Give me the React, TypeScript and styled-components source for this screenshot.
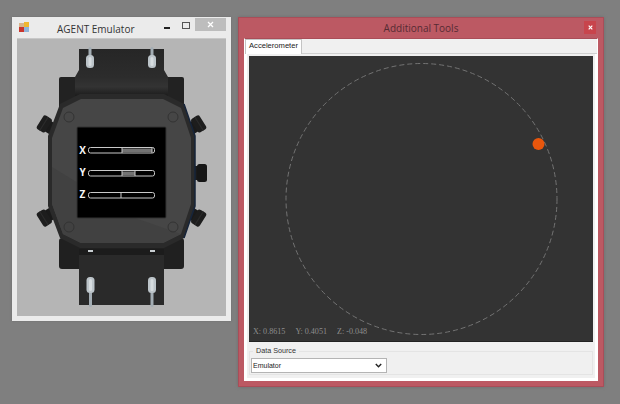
import React from "react";
import styled, { createGlobalStyle } from "styled-components";

const Global = createGlobalStyle`
  html, body { margin: 0; padding: 0; background: #7f7f7f; }
  #root { width: 620px; height: 404px; overflow: hidden; }
`;

const Desktop = styled.div`
  position: relative;
  width: 620px;
  height: 404px;
  background: #7f7f7f;
  font-family: "Liberation Sans", Arial, sans-serif;
`;

const EmulatorWindow = styled.section`
  position: absolute;
  left: 12px;
  top: 17px;
  width: 219px;
  height: 304px;
  box-sizing: border-box;
  background: #ebebeb;
  padding: 0 5px 5px;
  display: flex;
  flex-direction: column;
  box-shadow: 0 0 2px #6c6c6c;
`;

const EmulatorTitleBar = styled.header`
  height: 21px;
  flex: none;
  display: flex;
  align-items: flex-start;
`;

const AppIcon = styled.svg`
  width: 11px;
  height: 11px;
  margin: 5px 0 0 2px;
  flex: none;
`;

const EmulatorTitle = styled.h1`
  margin: 4px 0 0 27px;
  width: 90px;
  font: 400 10px/16px "Open Sans", "Noto Sans", sans-serif;
  color: #333;
  white-space: nowrap;
`;

const Caption = styled.div`
  margin-left: auto;
  display: flex;
  align-items: flex-start;
`;

const CaptionButton = styled.div<{ $w: number; $close?: boolean; $drop?: number }>`
  width: ${(p) => p.$w}px;
  height: 13px;
  margin-top: 1px;
  padding-top: ${(p) => p.$drop ?? 0}px;
  box-sizing: border-box;
  display: flex;
  align-items: center;
  justify-content: center;
  background: ${(p) => (p.$close ? "#bdbdbd" : "transparent")};
`;

const WatchStage = styled.div`
  flex: 1;
  background: #b5b5b5;
  border-top: 1px solid #c8c8c8;
  min-height: 0;
  svg { display: block; }
`;

const ToolsWindow = styled.section`
  position: absolute;
  left: 238px;
  top: 17px;
  width: 366px;
  height: 370px;
  box-sizing: border-box;
  background: #bc5963;
  border: 1px solid #a94d58;
  padding: 0 5px 5px;
  display: flex;
  flex-direction: column;
  box-shadow: 0 0 3px #6e6e6e;
`;

const ToolsTitleBar = styled.header`
  height: 20px;
  flex: none;
  display: flex;
  align-items: center;
  justify-content: center;
  position: relative;
`;

const ToolsTitle = styled.h2`
  margin: 0;
  font: 400 10px/16px "Open Sans", "Noto Sans", sans-serif;
  color: #562b33;
`;

const ToolsClose = styled.div`
  position: absolute;
  right: 2px;
  top: 3px;
  width: 12px;
  height: 13px;
  background: #c8444c;
  display: flex;
  align-items: center;
  justify-content: center;
`;

const Client = styled.div`
  flex: 1;
  background: #f0f0f0;
  border: 1px solid #fff;
  border-top-color: #a94d58;
  display: flex;
  flex-direction: column;
  min-height: 0;
`;

const TabStrip = styled.div`
  height: 14px;
  flex: none;
  display: flex;
  border-bottom: 1px solid #d0d0d0;
  box-sizing: content-box;
`;

const Tab = styled.div`
  width: 57px;
  height: 15px;
  box-sizing: border-box;
  background: #fff;
  border: 1px solid #c4c4c4;
  border-bottom: none;
  font-size: 7.6px;
  line-height: 12px;
  text-align: center;
  color: #222;
`;

const TabPage = styled.div`
  flex: 1;
  background: #f0f0f0;
  border-left: 2px solid #fff;
  border-right: 2px solid #fff;
  border-bottom: 2px solid #fff;
  padding: 2px 2px 3px;
  display: flex;
  flex-direction: column;
  gap: 3px;
  min-height: 0;
`;

const Scope = styled.div`
  position: relative;
  height: 286px;
  flex: none;
  background: #333;
  border-bottom: 1px solid #222;
  box-sizing: border-box;
  svg { display: block; }
`;

const Readout = styled.div`
  position: absolute;
  left: 4px;
  bottom: 3px;
  display: flex;
  gap: 10px;
  font: 400 8.1px/12px "Liberation Serif", serif;
  color: #8e8e8e;
`;

const Group = styled.fieldset`
  flex: 1;
  margin: 1px 0 0;
  padding: 4px 1px 0;
  min-width: 0;
  border: 1px solid #e4e4e4;
  display: flex;
  align-items: flex-start;
`;

const GroupLabel = styled.legend`
  margin-left: 2px;
  padding: 0 3px;
  font-size: 7.2px;
  line-height: 10px;
  color: #333;
`;

const Select = styled.div`
  width: 136px;
  height: 15px;
  box-sizing: border-box;
  margin-top: -2px;
  background: #fff;
  border: 1px solid #b4b4b4;
  display: flex;
  align-items: center;
  justify-content: space-between;
  padding: 0 4px 0 1px;
  font-size: 7px;
  color: #222;
`;

const Pin = ({ x, y, down }: { x: number; y: number; down?: boolean }) => (
  <g>
    <rect x={x - 1.5} y={down ? y + 10 : y - 8} width="3" height={down ? 20 : 10} rx="1.5" fill="#a3adb4" />
    <rect x={x - 4} y={y} width="8" height={down ? 16 : 13} rx="3.5" fill="#bcc4c9" />
    <rect x={x - 1.5} y={y + 2} width="3" height={down ? 12 : 9} rx="1.5" fill="#d6dcdf" />
  </g>
);

const Crown = ({ x, y, r }: { x: number; y: number; r: number }) => (
  <g transform={`rotate(${r} ${x} ${y})`}>
    <rect x={x - 2} y={y - 6} width="14" height="12" fill="#1a1a1a" />
    <rect x={x - 7} y={y - 8} width="10" height="16" rx="2.5" fill="#1d1d1d" />
    <rect x={x - 3} y={y - 8} width="1.2" height="16" fill="#2b2b2b" />
  </g>
);

const Bar = ({ y, from, to }: { y: number; from?: number; to?: number }) => (
  <g stroke="#c9c9c9" strokeWidth="1">
    <rect x="88.5" y={y - 2.5} width="66" height="5.5" rx="2" fill="#000" />
    {from !== undefined && to !== undefined ? (
      <>
        <rect x={from} y={y - 1.5} width={to - from} height="3.5" fill="#737373" stroke="none" />
        <line x1={from} x2={from} y1={y - 2.5} y2={y + 3} />
        <line x1={to} x2={to} y1={y - 2.5} y2={y + 3} />
      </>
    ) : (
      <line x1="121" x2="121" y1={y - 2.5} y2={y + 3} />
    )}
  </g>
);

const Watch = () => (
  <svg width="209" height="277" viewBox="17 39 209 277">
    <defs>
      <linearGradient id="strap" x1="0" y1="0" x2="0" y2="1">
        <stop offset="0" stopColor="#262626" />
        <stop offset="0.6" stopColor="#2c2c2c" />
        <stop offset="0.8" stopColor="#333" />
        <stop offset="1" stopColor="#1c1c1c" />
      </linearGradient>
    </defs>
    <rect x="59" y="77" width="125" height="32" rx="2" fill="#222" />
    <rect x="59" y="238" width="125" height="31" rx="3" fill="#202020" />
    <path d="M79 49H164V70L168 77V96H75V77L79 70Z" fill="url(#strap)" />
    <path d="M79 249H164V305H79Z" fill="#2a2a2a" />
    <rect x="79" y="249" width="85" height="6" fill="#1c1c1c" />
    <rect x="88" y="250" width="5" height="2" fill="#c9cfd2" />
    <rect x="150" y="250" width="5" height="2" fill="#c9cfd2" />
    <Pin x={90} y={55} />
    <Pin x={152} y={55} />
    <Pin x={90.5} y={277} down />
    <Pin x={152} y={277} down />
    <Crown x={46} y={125} r={32} />
    <Crown x={46} y={217} r={-32} />
    <Crown x={197} y={125} r={148} />
    <Crown x={197} y={217} r={212} />
    <rect x="190" y="166" width="12" height="14" fill="#1a1a1a" />
    <rect x="197" y="164" width="10" height="18" rx="2.5" fill="#161616" />
    <path d="M60 104L80 94H164L184 104L195 136V206L184 238L164 248H80L60 238L48 206V136Z" fill="#2a2a2a" />
    <path d="M63 108L81 99H163L181 108L191 138V204L181 234L163 243H81L63 234L52 204V138Z" fill="#464646" />
    <path d="M52 167L135 218L181 234L163 243H81L63 234L52 204Z" fill="#414141" />
    <path d="M184 104L195 136V206L184 238" fill="none" stroke="#16243a" strokeWidth="1.5" />
    <circle cx="69" cy="117" r="5" fill="none" stroke="#333" />
    <circle cx="173" cy="117" r="5" fill="none" stroke="#333" />
    <circle cx="69" cy="227" r="5" fill="none" stroke="#333" />
    <circle cx="173" cy="227" r="5" fill="none" stroke="#333" />
    <rect x="77" y="127" width="89" height="91" rx="1" fill="#000" stroke="#333" strokeWidth="1" />
    <g fill="#f6f6f6" fontFamily="'Open Sans', sans-serif" fontWeight="700" fontSize="10" textAnchor="middle">
      <text x="82.5" y="153.5">X</text>
      <text x="82.5" y="176">Y</text>
      <text x="82.5" y="198">Z</text>
    </g>
    <Bar y={150} from={122} to={152} />
    <Bar y={173} from={122} to={135} />
    <Bar y={195} />
  </svg>
);

export default function App() {
  return (
    <Desktop>
      <Global />
      <EmulatorWindow>
        <EmulatorTitleBar>
          <AppIcon viewBox="0 0 11 11">
            <rect x="0" y="1" width="5" height="4" fill="#d9b48a" />
            <rect x="5" y="0" width="5" height="5" fill="#f0b72f" />
            <rect x="0" y="5" width="5" height="5" fill="#c9352d" />
            <rect x="5" y="5" width="5" height="5" fill="#8fb3d9" />
          </AppIcon>
          <EmulatorTitle>AGENT Emulator</EmulatorTitle>
          <Caption>
            <CaptionButton $w={18} $drop={7}>
              <svg width="6" height="2" viewBox="0 0 6 2"><rect width="6" height="2" fill="#222" /></svg>
            </CaptionButton>
            <CaptionButton $w={19} $drop={2}>
              <svg width="8" height="7" viewBox="0 0 8 7"><rect x="0.5" y="0.5" width="7" height="6" fill="none" stroke="#555" /></svg>
            </CaptionButton>
            <CaptionButton $w={31} $close>
              <svg width="7" height="7" viewBox="0 0 7 7"><path d="M1 1L6 6M6 1L1 6" stroke="#fff" strokeWidth="1.3" /></svg>
            </CaptionButton>
          </Caption>
        </EmulatorTitleBar>
        <WatchStage><Watch /></WatchStage>
      </EmulatorWindow>

      <ToolsWindow>
        <ToolsTitleBar>
          <ToolsTitle>Additional Tools</ToolsTitle>
          <ToolsClose>
            <svg width="5" height="5" viewBox="0 0 5 5"><path d="M0.7 0.7L4.3 4.3M4.3 0.7L0.7 4.3" stroke="#fff" strokeWidth="1.2" /></svg>
          </ToolsClose>
        </ToolsTitleBar>
        <Client>
          <TabStrip><Tab>Accelerometer</Tab></TabStrip>
          <TabPage>
            <Scope>
              <svg width="345" height="285" viewBox="248 55 345 285">
                <circle cx="420.5" cy="198" r="135.5" fill="none" stroke="#737373" strokeWidth="1" strokeDasharray="5 3" />
                <circle cx="537.5" cy="143" r="6" fill="#e8560c" />
              </svg>
              <Readout>
                <span>X: 0.8615</span>
                <span>Y: 0.4051</span>
                <span>Z: -0.048</span>
              </Readout>
            </Scope>
            <Group>
              <GroupLabel>Data Source</GroupLabel>
              <Select>
                <span>Emulator</span>
                <svg width="7" height="5" viewBox="0 0 7 5"><path d="M0.8 1L3.5 3.8L6.2 1" fill="none" stroke="#222" strokeWidth="1.4" /></svg>
              </Select>
            </Group>
          </TabPage>
        </Client>
      </ToolsWindow>
    </Desktop>
  );
}
